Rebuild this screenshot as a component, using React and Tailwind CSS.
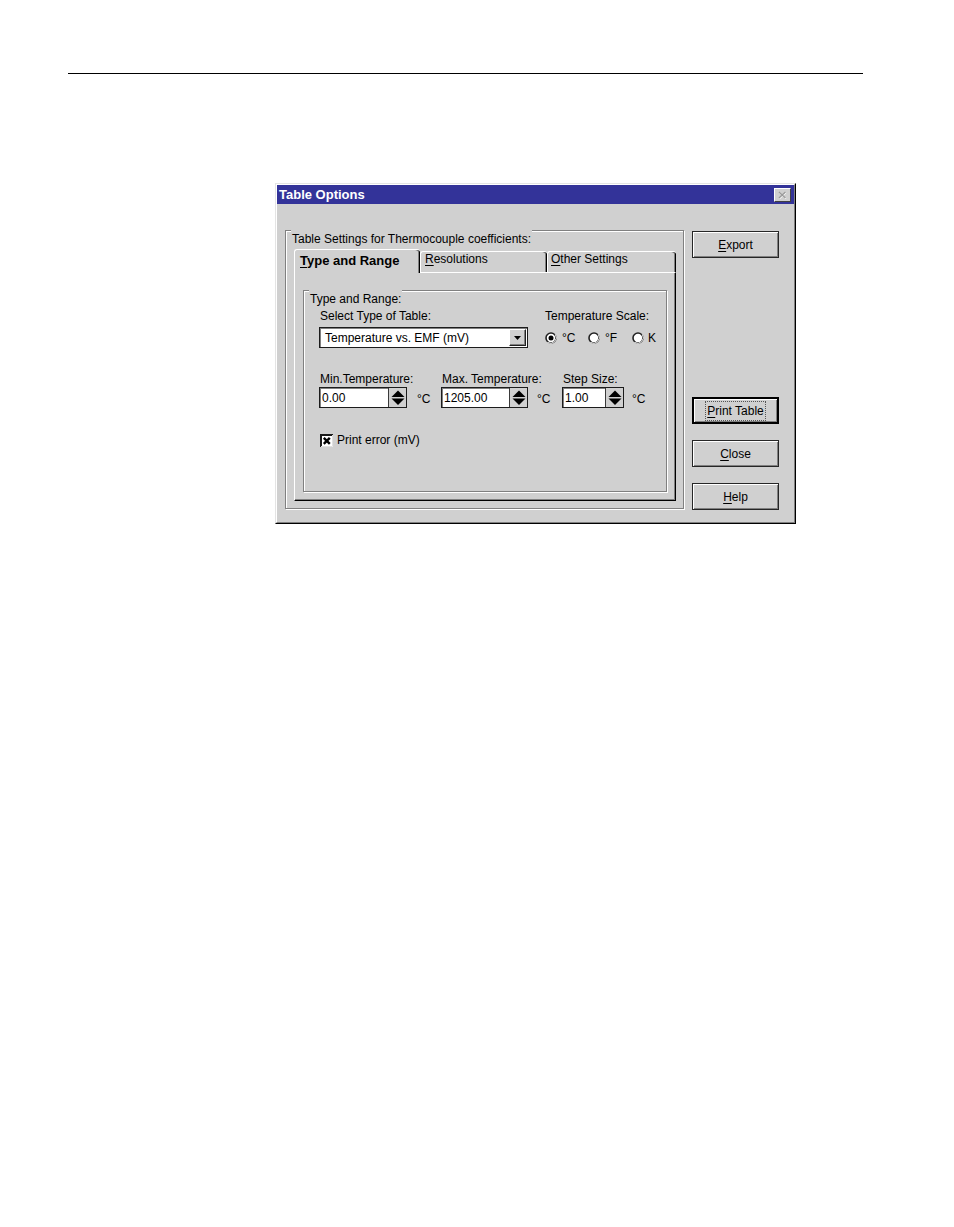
import React from 'react';

const face = 'bg-[#d0d0d0]';

function Accel({ children }) {
  return <span className="underline decoration-1 underline-offset-[2px]">{children}</span>;
}

function SpinArrows() {
  return (
    <svg width="16" height="19" viewBox="0 0 16 19">
      <path d="M1.5 9 L8 2.5 L14.5 9 Z" fill="#000" />
      <path d="M1.5 10.5 L8 17 L14.5 10.5 Z" fill="#000" />
    </svg>
  );
}

function SpinField({ value, className }) {
  return (
    <div className={`flex h-[21px] border border-[#1c1c1c] bg-white shadow-[inset_1px_1px_#808080] ${className}`}>
      <div className="flex-1 pl-[2px] pt-px leading-[18px]">{value}</div>
      <div className={`flex w-[18px] items-center justify-center border-l border-[#3a3a3a] ${face}`}>
        <SpinArrows />
      </div>
    </div>
  );
}

function Radio({ checked }) {
  return (
    <svg width="12" height="12" viewBox="0 0 12 12">
      <circle cx="6" cy="6" r="5" fill="#fff" stroke="#222" strokeWidth="1.6" />
      <path d="M10.4 2.4 A5.8 5.8 0 0 1 2.4 10.4" fill="none" stroke="#ececec" strokeWidth="1" />
      {checked ? <circle cx="6" cy="6" r="2.5" fill="#000" /> : null}
    </svg>
  );
}

function CheckBox() {
  return (
    <svg width="13" height="13" viewBox="0 0 13 13">
      <rect x="0" y="0" width="13" height="13" fill="#fff" />
      <path d="M1 13 V1 H13" fill="none" stroke="#1a1a1a" strokeWidth="2" />
      <path d="M12.5 1 V12.5 H1" fill="none" stroke="#e0e0e0" strokeWidth="1" />
      <path d="M3.8 3.8 L9.8 9.8 M9.8 3.8 L3.8 9.8" stroke="#000" strokeWidth="2.4" />
    </svg>
  );
}

function GroupBox({ label, className, children }) {
  return (
    <div className={`relative border border-[#808080] shadow-[inset_1px_1px_#fff,1px_1px_#fff] ${className}`}>
      <div className={`absolute left-[5px] top-[-2px] px-px pt-[3px] leading-[14px] ${face}`}>{label}</div>
      {children}
    </div>
  );
}

function PushButton({ children, isDefault }) {
  const edge = isDefault
    ? 'border-2 border-black'
    : 'border border-[#262626]';
  return (
    <div
      className={`flex h-[27px] w-[87px] items-center justify-center ${edge} shadow-[inset_1px_1px_#fff,inset_-1px_-1px_#808080] ${face}`}
    >
      {children}
    </div>
  );
}

export default function App() {
  return (
    <div className="min-h-[1227px] w-[954px] bg-white pt-[73px] font-['Liberation_Sans',Arial,sans-serif] text-[12px] text-black">
      <div className="ml-[68px] h-px w-[795px] bg-black" />

      <div className={`ml-[275px] mt-[109px] w-[521px] border border-b-black border-l-[#e4e4e4] border-r-black border-t-[#e4e4e4] ${face}`}>
        <div className="h-[339px] border border-b-[#808080] border-l-white border-r-[#808080] border-t-white">
          {/* title bar */}
          <div className="flex h-[19px] items-start bg-[#333399]">
            <div className="pl-[2px] text-[13px] font-bold leading-[19px] text-white">Table Options</div>
            <div className={`ml-auto mr-[3px] mt-[3px] flex h-[14px] w-[17px] items-center justify-center border border-b-[#404040] border-l-white border-r-[#404040] border-t-white ${face}`}>
              <svg width="9" height="8" viewBox="0 0 9 8">
                <path d="M1.5 1.5 L8 7.5 M8 1.5 L1.5 7.5" stroke="#fff" strokeWidth="1.4" />
                <path d="M1 1 L7.5 7 M7.5 1 L1 7" stroke="#9a9a9a" strokeWidth="1.4" />
              </svg>
            </div>
          </div>

          <div className="flex pl-[8px] pt-[26px]">
            <GroupBox label="Table Settings for Thermocouple coefficients:" className="h-[279px] w-[399px] pl-[8px] pt-[18px]">
              {/* tabs */}
              <div className="flex h-[23px] items-end">
                <div className={`relative z-10 -mb-px h-[24px] w-[126px] rounded-tl-[3px] rounded-tr-[3px] border-l border-t border-white pl-[5px] pt-[3px] text-[13px] font-bold leading-[16px] shadow-[inset_-1px_0_#000,inset_-2px_0_#808080] ${face}`}>
                  <Accel>T</Accel>ype and Range
                </div>
                <div className={`h-[21px] w-[127px] rounded-tl-[3px] rounded-tr-[3px] border-l border-t border-white pl-[4px] leading-[14px] shadow-[inset_-1px_0_#000,inset_-2px_0_#808080] ${face}`}>
                  <Accel>R</Accel>esolutions
                </div>
                <div className={`h-[21px] w-[129px] rounded-tl-[3px] rounded-tr-[3px] border-l border-t border-white pl-[3px] leading-[14px] shadow-[inset_-1px_0_#000,inset_-2px_0_#808080] ${face}`}>
                  <Accel>O</Accel>ther Settings
                </div>
              </div>

              {/* tab panel */}
              <div className="h-[229px] w-[382px] border-b border-l border-r border-t border-b-black border-l-white border-r-black border-t-white pl-[8px] pt-[17px] shadow-[inset_-1px_-1px_#808080]">
                <GroupBox label="Type and Range:" className="h-[202px] w-[364px] pl-[15px] pt-[18px]">
                  <div className="flex">
                    <div className="w-[226px]">
                      <div className="pl-px leading-[14px]">Select Type of Table:</div>
                      <div className="mt-[4px] flex h-[21px] w-[209px] items-center border border-[#1c1c1c] bg-white p-px shadow-[inset_1px_1px_#808080]">
                        <div className="flex-1 pl-[4px] leading-[16px]">Temperature vs. EMF (mV)</div>
                        <div className={`flex h-[17px] w-[17px] items-center justify-center border border-b-[#222] border-l-white border-r-[#222] border-t-white shadow-[inset_-1px_-1px_#808080] ${face}`}>
                          <svg width="7" height="4" viewBox="0 0 7 4">
                            <path d="M0 0 H7 L3.5 4 Z" fill="#000" />
                          </svg>
                        </div>
                      </div>
                    </div>
                    <div>
                      <div className="leading-[14px]">Temperature Scale:</div>
                      <div className="mt-[9px] flex h-[12px] items-center">
                        <div className="flex w-[43px] items-center">
                          <Radio checked />
                          <span className="ml-[5px] leading-[12px]">°C</span>
                        </div>
                        <div className="flex w-[44px] items-center">
                          <Radio />
                          <span className="ml-[5px] leading-[12px]">°F</span>
                        </div>
                        <div className="flex items-center">
                          <Radio />
                          <span className="ml-[4px] leading-[12px]">K</span>
                        </div>
                      </div>
                    </div>
                  </div>

                  <div className="mt-[24px] flex">
                    <div className="w-[122px]">
                      <div className="pl-px leading-[14px]">Min.Temperature:</div>
                      <div className="mt-px flex items-center">
                        <SpinField value="0.00" className="w-[88px]" />
                        <span className="ml-[10px] mt-[2px]">°C</span>
                      </div>
                    </div>
                    <div className="w-[121px]">
                      <div className="pl-px leading-[14px]">Max. Temperature:</div>
                      <div className="mt-px flex items-center">
                        <SpinField value="1205.00" className="w-[87px]" />
                        <span className="ml-[9px] mt-[2px]">°C</span>
                      </div>
                    </div>
                    <div>
                      <div className="pl-px leading-[14px]">Step Size:</div>
                      <div className="mt-px flex items-center">
                        <SpinField value="1.00" className="w-[62px]" />
                        <span className="ml-[8px] mt-[2px]">°C</span>
                      </div>
                    </div>
                  </div>

                  <div className="mt-[25px] flex items-center pl-px">
                    <CheckBox />
                    <span className="ml-[4px] leading-[14px]">Print error (mV)</span>
                  </div>
                </GroupBox>
              </div>
            </GroupBox>

            <div className="ml-[8px] mt-px flex flex-col">
              <PushButton>
                <span><Accel>E</Accel>xport</span>
              </PushButton>
              <div className="mt-[139px]">
                <PushButton isDefault>
                  <span className="px-px outline outline-1 outline-dotted outline-[#555]">
                    <Accel>P</Accel>rint Table
                  </span>
                </PushButton>
              </div>
              <div className="mt-[16px]">
                <PushButton>
                  <span><Accel>C</Accel>lose</span>
                </PushButton>
              </div>
              <div className="mt-[16px]">
                <PushButton>
                  <span><Accel>H</Accel>elp</span>
                </PushButton>
              </div>
            </div>
          </div>
        </div>
      </div>
    </div>
  );
}
